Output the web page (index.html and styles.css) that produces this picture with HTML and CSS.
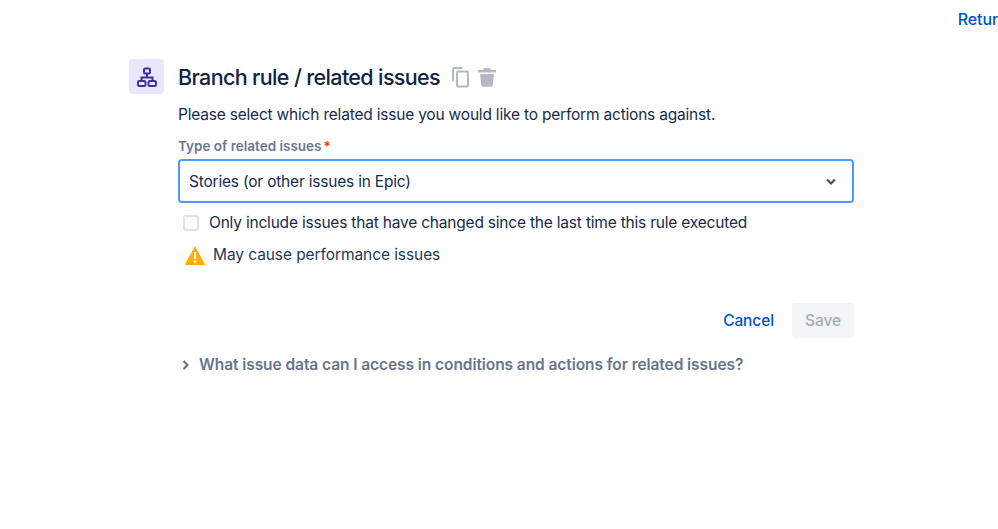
FILE: index.html
```html
<!DOCTYPE html>
<html lang="en">
<head>
    <meta charset="UTF-8">
    <meta name="viewport" content="width=device-width, initial-scale=1.0">
    <title>Branch rule / related issues</title>
    <link rel="stylesheet" href="styles.css">
</head>
<body>
    <div class="top-bar">
        <a class="return-link" href="#">Retur</a>
    </div>

    <div class="rule">
        <div class="rule-icon">
            <svg width="22" height="22" viewBox="0 0 22 22" fill="none" stroke="#403294" stroke-width="2">
                <rect x="8" y="2.500" width="6" height="5" rx="1"/>
                <rect x="2" y="15" width="7.500" height="5" rx="1.500"/>
                <rect x="12.500" y="15" width="7.500" height="5" rx="1.500"/>
                <path d="M11 7.500v4M5.500 15v-3.500h11V15"/>
            </svg>
        </div>

        <div class="rule-body">
            <div class="rule-title">
                <h1>Branch rule / related issues</h1>
                <svg class="title-icon" width="20" height="22" viewBox="0 0 20 22" fill="none" stroke="#b3b9c4" stroke-width="2">
                    <path d="M11.500 2H3.500A1.500 1.500 0 0 0 2 3.500V15"/>
                    <rect x="6" y="5.500" width="11" height="15" rx="1.500"/>
                </svg>
                <svg class="title-icon" width="20" height="20" viewBox="0 0 20 20" fill="#b3b9c4">
                    <path d="M7 1h6l1 2h5v2.500H1V3h5z"/>
                    <path d="M3 7h14l-1.300 11.500a1.500 1.500 0 0 1-1.500 1.300H5.800a1.500 1.500 0 0 1-1.500-1.300z"/>
                </svg>
            </div>

            <p class="rule-desc">Please select which related issue you would like to perform actions against.</p>

            <label class="field-label">Type of related issues<span class="required">*</span></label>
            <div class="select-box">
                <span>Stories (or other issues in Epic)</span>
                <svg width="12" height="8" viewBox="0 0 12 8" fill="none" stroke="#42526e" stroke-width="2.200">
                    <path d="M2 1.500l4 4 4-4"/>
                </svg>
            </div>

            <div class="check-row">
                <span class="checkbox"></span>
                <span>Only include issues that have changed since the last time this rule executed</span>
            </div>

            <div class="warning-row">
                <svg width="20" height="19" viewBox="0 0 20 19">
                    <path d="M10 1L19.500 18.500H0.500z" fill="#ffab00" stroke="#ffab00" stroke-width="1" stroke-linejoin="round"/>
                    <path d="M10 6v7" stroke="#fff" stroke-width="2.200"/>
                    <circle cx="10" cy="15.500" r="1.300" fill="#fff"/>
                </svg>
                <span>May cause performance issues</span>
            </div>

            <div class="actions">
                <button class="btn-cancel">Cancel</button>
                <button class="btn-save" disabled>Save</button>
            </div>

            <div class="help-row">
                <svg width="8" height="12" viewBox="0 0 8 12" fill="none" stroke="#5e6c84" stroke-width="2">
                    <path d="M1.500 2l4 4-4 4"/>
                </svg>
                <span>What issue data can I access in conditions and actions for related issues?</span>
            </div>
        </div>
    </div>
</body>
</html>
```

FILE: styles.css
```css
html, body {
    margin: 0;
    height: 529px;
    overflow: hidden;
}
body {
    background-color: #fff;
    color: #172b4d;
    font-family: Inter, "Liberation Sans", sans-serif;
    font-size: 15.500px;
    line-height: 20px;
    letter-spacing: -0.2px;
}
.top-bar {
    display: flex;
    justify-content: flex-end;
    padding-top: 9px;
    height: 50px;
    box-sizing: border-box;
}
.return-link {
    color: #0052cc;
    font-size: 16px;
    font-weight: 500;
    letter-spacing: -0.1px;
    text-decoration: none;
}
.rule {
    display: flex;
    gap: 14px;
    padding: 9px 0 0 129px;
}
.rule-icon {
    width: 35px;
    height: 35px;
    background-color: #eae6ff;
    border-radius: 4px;
    display: flex;
    align-items: center;
    justify-content: center;
}
.rule-body {
    width: 676px;
}
.rule-title {
    display: flex;
    align-items: center;
    height: 36px;
}
.rule-title h1 {
    margin: 0 11px 0 0;
    font-size: 21.500px;
    font-weight: 500;
    letter-spacing: -0.64px;
    line-height: 36px;
    color: #0f2247;
}
.title-icon {
    margin-right: 6px;
}
.rule-desc {
    margin: 10px 0 0;
}
.field-label {
    display: block;
    margin-top: 11px;
    color: #6b778c;
    font-size: 13.500px;
    font-weight: 600;
    letter-spacing: 0;
    line-height: 20px;
}
.required {
    color: #de350b;
    margin-left: 2px;
}
.select-box {
    display: flex;
    align-items: center;
    justify-content: space-between;
    box-sizing: border-box;
    height: 44px;
    margin-top: 3px;
    padding: 1px 15px 0 9px;
    border: 2px solid #4c9aff;
    border-radius: 4px;
}
.check-row {
    display: flex;
    align-items: center;
    gap: 10px;
    margin-top: 10px;
    padding-left: 5px;
}
.checkbox {
    width: 12px;
    height: 12px;
    background-color: #fafbfc;
    border: 2px solid #dfe1e6;
    border-radius: 3px;
}
.warning-row {
    display: flex;
    align-items: center;
    gap: 8px;
    margin-top: 12px;
    padding-left: 7px;
    color: #253858;
    letter-spacing: -0.08px;
}
.actions {
    display: flex;
    justify-content: flex-end;
    align-items: center;
    gap: 18px;
    margin-top: 38px;
}
button {
    font-family: inherit;
    font-size: 15.500px;
    font-weight: 500;
    letter-spacing: -0.1px;
    border: none;
    background: none;
    padding: 0;
}
.btn-cancel {
    color: #0052cc;
    cursor: pointer;
}
.btn-save {
    width: 62px;
    height: 35px;
    background-color: #f4f5f7;
    color: #a5adba;
    border-radius: 4px;
}
.help-row {
    display: flex;
    align-items: center;
    gap: 9px;
    margin-top: 17px;
    padding-left: 4px;
    color: #67758e;
    font-weight: 600;
    letter-spacing: -0.07px;
}
```
